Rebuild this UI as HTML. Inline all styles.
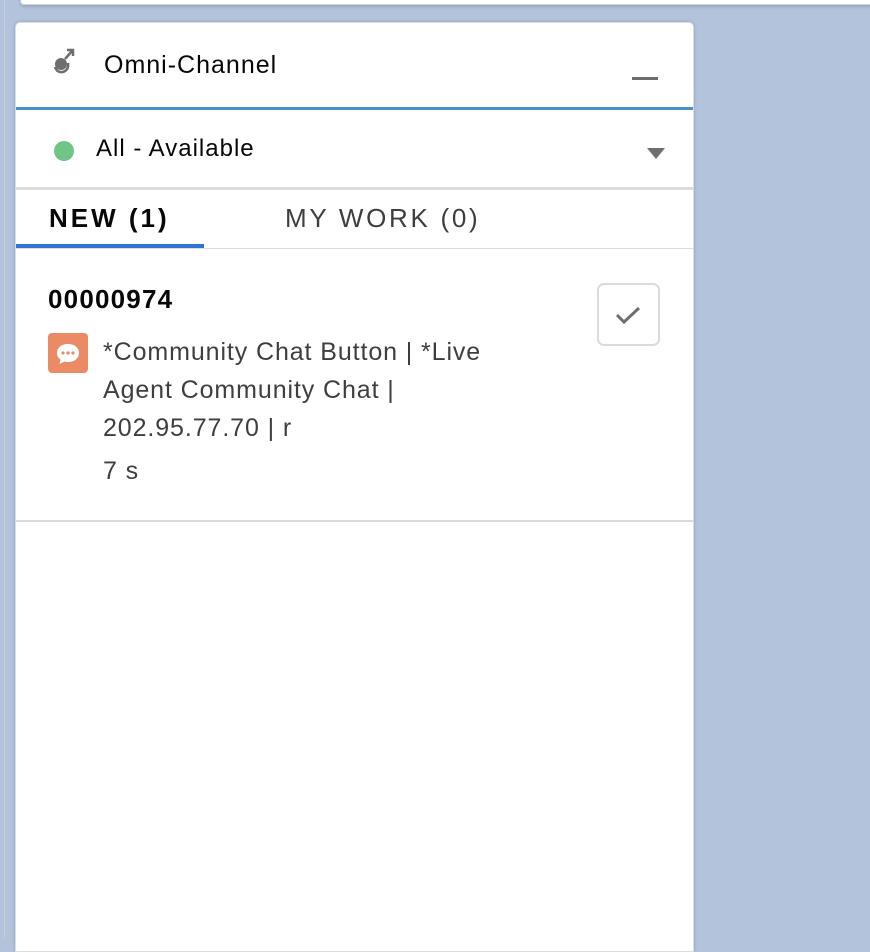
<!DOCTYPE html>
<html><head><style>
*{margin:0;padding:0;box-sizing:border-box}
body{width:870px;height:938px;background:#b3c3dc;position:relative;overflow:hidden;font-family:"Liberation Sans",sans-serif;color:#16325c}
.top{position:absolute;left:20px;top:-10px;width:860px;height:15px;background:#fff;border:1px solid #d0d6df;border-radius:4px;box-shadow:0 2px 3px rgba(0,0,0,.15)}
.lstrip{position:absolute;left:0;top:0;width:5px;height:938px;background:#b3c3dc;border-right:1px solid #c8ced8}
.panel{position:absolute;left:15px;top:22px;width:679px;height:930px;background:#fff;border:1px solid #d8dde6;border-radius:5px 5px 0 0;box-shadow:0 0 3px rgba(0,0,0,.2)}
.abs{position:absolute;white-space:nowrap}
</style></head><body>
<div class="lstrip"></div>
<div class="top"></div>
<div class="panel">
 <svg class="abs" style="left:35px;top:22px" width="26" height="30" viewBox="0 0 26 30">
  <circle cx="10" cy="19" r="6" fill="#706e6b"/>
  <path d="M4 22 Q6 28 12 27 Q18 25 17 18" stroke="#706e6b" stroke-width="2.5" fill="none"/>
  <path d="M14 14 L21 6 M16 5 H22 V11" stroke="#706e6b" stroke-width="2.5" fill="none"/>
 </svg>
 <div class="abs" style="left:88px;top:28px;font-size:25px;letter-spacing:1px;color:#080707">Omni-Channel</div>
 <div class="abs" style="left:616px;top:54px;width:26px;height:3px;background:#706e6b"></div>
 <div class="abs" style="left:0;top:84px;width:677px;height:3px;background:#4a90d0"></div>
 <div class="abs" style="left:38px;top:118px;width:20px;height:20px;border-radius:50%;background:#6fc486"></div>
 <div class="abs" style="left:80px;top:112px;font-size:24px;letter-spacing:1px;color:#080707">All - Available</div>
 <div class="abs" style="left:631px;top:125px;width:0;height:0;border-left:9px solid transparent;border-right:9px solid transparent;border-top:11px solid #706e6b"></div>
 <div class="abs" style="left:0;top:164px;width:677px;height:3px;background:#dddbda"></div>
 <div class="abs" style="left:33px;top:180px;font-size:26px;font-weight:bold;color:#080707;letter-spacing:3px">NEW (1)</div>
 <div class="abs" style="left:269px;top:180px;font-size:26px;color:#3e3e3c;letter-spacing:2.7px">MY WORK (0)</div>
 <div class="abs" style="left:0;top:225px;width:677px;height:1px;background:#dddbda"></div>
 <div class="abs" style="left:0;top:221px;width:188px;height:4px;background:#2e74d0"></div>
 <div class="abs" style="left:32px;top:261px;font-size:26px;font-weight:bold;color:#080707;letter-spacing:1.2px">00000974</div>
 <div class="abs" style="left:32px;top:310px;width:40px;height:40px;border-radius:4px;background:#eb8b66">
  <svg width="40" height="40" viewBox="0 0 40 40"><path d="M20 11 C13 11 9 15 9 20 C9 23 10.5 25 12.5 26.5 L11.5 31 L16.5 28.5 C17.5 28.8 18.7 29 20 29 C27 29 31 25 31 20 C31 15 27 11 20 11 Z" fill="#fff"/><circle cx="15" cy="20" r="1.6" fill="#eb8b66"/><circle cx="20" cy="20" r="1.6" fill="#eb8b66"/><circle cx="25" cy="20" r="1.6" fill="#eb8b66"/></svg>
 </div>
 <div class="abs" style="left:87px;top:310px;font-size:25px;line-height:38px;color:#3e3e3c;letter-spacing:0.9px">*Community Chat Button | *Live<br>Agent Community Chat |<br>202.95.77.70 | r</div>
 <div class="abs" style="left:87px;top:434px;font-size:25px;color:#3e3e3c;letter-spacing:0.9px">7 s</div>
 <div class="abs" style="left:581px;top:260px;width:63px;height:63px;border:2px solid #dddbda;border-radius:7px">
  <svg width="59" height="59" viewBox="0 0 59 59"><path d="M18 30 L25 37 L40 23" stroke="#706e6b" stroke-width="3" fill="none"/></svg>
 </div>
 <div class="abs" style="left:0;top:497px;width:677px;height:2px;background:#dddbda"></div>
</div>
</body></html>
